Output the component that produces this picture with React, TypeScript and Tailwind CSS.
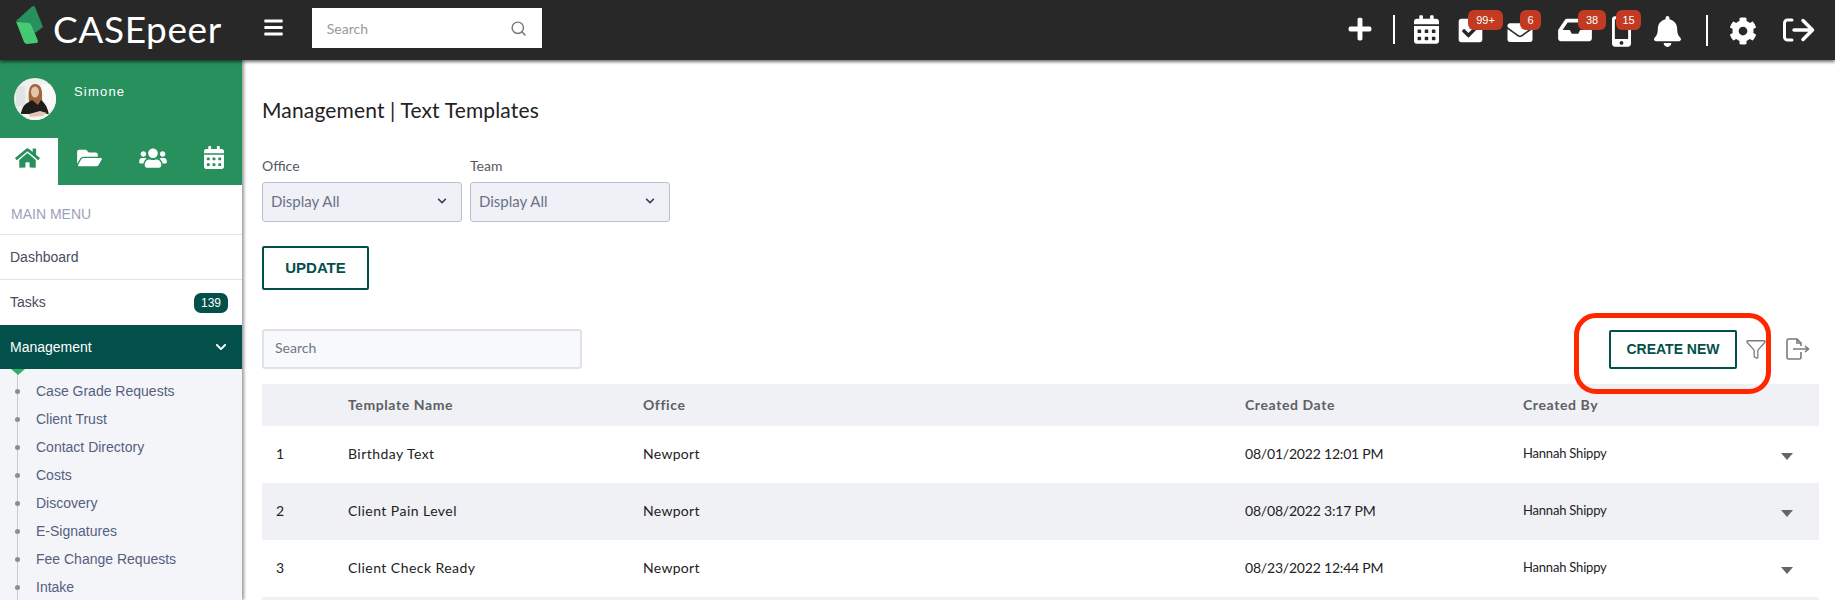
import { FaBars, FaBell, FaCalendarAlt, FaCheckSquare, FaChevronDown, FaCog, FaEnvelope, FaFolderOpen, FaHome, FaInbox, FaMobileAlt, FaPlus, FaUsers } from 'react-icons/fa';
import { Search, Filter } from 'lucide-react';

const subMenu = ['Case Grade Requests', 'Client Trust', 'Contact Directory', 'Costs', 'Discovery', 'E-Signatures', 'Fee Change Requests', 'Intake'];

const rows = [
  { id: 1, name: 'Birthday Text', date: '08/01/2022 12:01 PM' },
  { id: 2, name: 'Client Pain Level', date: '08/08/2022 3:17 PM' },
  { id: 3, name: 'Client Check Ready', date: '08/23/2022 12:44 PM' },
];

function Badge({ label, className }: { label: string; className: string }) {
  return (
    <span className={`absolute top-[10px] flex h-[20px] items-center justify-center rounded-[6px] bg-[#c23a22] text-[11px] text-white ${className}`}>
      {label}
    </span>
  );
}

function Logo() {
  return (
    <svg width="28" height="40" viewBox="16 5 28 40" className="mb-[10px] shrink-0">
      <path d="M16 21 L32 6.500 Q34 5.500 35 7 L43 27 L35 33 L31 24 Z" fill="#27905d" />
      <path d="M16 21.500 L29 23 Q31 23 32 26 L38 41 Q38 43 36 43 L27 44 Q25 44 24 42 Z" fill="#46c973" />
    </svg>
  );
}

function Avatar() {
  return (
    <svg width="42" height="42" viewBox="0 0 42 42" className="rounded-full bg-[#eef0ee]">
      <rect x="27" y="6" width="15" height="26" fill="#f8f9f8" />
      <rect x="2" y="8" width="9" height="20" fill="#dfe4e2" />
      <path d="M15 24 Q13 6 21 6 Q29 6 28 20 L29 30 L22 31 L15 30 Z" fill="#a0673c" />
      <ellipse cx="21" cy="14" rx="4" ry="5.500" fill="#e8c3aa" />
      <path d="M7 35 Q9 26 15 24 L18 22 L24 27 L27 22 Q33 26 35 37 L8 38 Z" fill="#1f1c1c" />
      <rect x="0" y="36" width="42" height="6" fill="#f4f4f3" />
      <path d="M15 36 L26 33 L33 35 L28 38 L16 39 Z" fill="#e3c4b3" />
    </svg>
  );
}

function Select({ label }: { label: string }) {
  return (
    <div className="w-[200px]">
      <div className="mb-[6px] h-[20px] font-['Lato'] text-[14px] leading-[20px] text-[#555a60]">{label}</div>
      <div className="flex h-[40px] items-center justify-between rounded-[3px] border border-[#b8bfd0] bg-[#f0f1f6] pb-[2px] pl-[8px] pr-[14px] font-['Lato'] text-[15px] text-[#68728a]">
        Display All
        <FaChevronDown className="h-[10px] w-[10px] text-[#3a4460]" />
      </div>
    </div>
  );
}

export default function App() {
  return (
    <div className="flex h-[600px] w-[1835px] flex-col overflow-hidden bg-white font-['Liberation_Sans',sans-serif]">
      {/* Top bar */}
      <header className="relative z-20 flex h-[60px] shrink-0 items-center bg-[#282828] pl-[16px] shadow-[0_2px_3px_rgba(0,0,0,0.55)]">
        <Logo />
        <span className="mb-[4px] ml-[9px] font-['Lato'] text-[37px] leading-none tracking-[0.6px] text-white">CASEpeer</span>
        <FaBars className="mb-[6px] ml-[42px] h-[21px] w-[19px] text-white" />
        <div className="mb-[4px] ml-[29px] flex h-[40px] w-[230px] items-center justify-between bg-white px-[15px] font-['Lato'] text-[14px] text-[#9a9a9a]">
          Search
          <Search className="h-[17px] w-[17px] text-[#777]" />
        </div>
        <div className="relative ml-auto h-full w-[490px] text-white">
          <FaPlus className="absolute left-[2px] top-[16px] h-[26px] w-[26px]" />
          <div className="absolute left-[48px] top-[15px] h-[29px] w-[2px] bg-white" />
          <FaCalendarAlt className="absolute left-[69px] top-[15px] h-[29px] w-[25px]" />
          <FaCheckSquare className="absolute left-[113px] top-[17px] h-[27px] w-[25px]" />
          <Badge label="99+" className="left-[123px] w-[35px]" />
          <FaEnvelope className="absolute left-[160px] top-[20px] h-[25px] w-[30px]" />
          <Badge label="6" className="left-[175px] w-[21px]" />
          <FaInbox className="absolute left-[212px] top-[15px] h-[30px] w-[36px]" />
          <Badge label="38" className="left-[233px] w-[28px]" />
          <FaMobileAlt className="absolute left-[267px] top-[16px] h-[31px] w-[19px]" />
          <Badge label="15" className="left-[271px] w-[25px]" />
          <FaBell className="absolute left-[309px] top-[16px] h-[31px] w-[27px]" />
          <div className="absolute left-[361px] top-[15px] h-[31px] w-[2px] bg-white" />
          <FaCog className="absolute left-[384px] top-[16px] h-[30px] w-[28px]" />
          <svg width="32" height="24" viewBox="0 0 32 24" fill="none" stroke="white" strokeWidth="3" strokeLinecap="round" strokeLinejoin="round" className="absolute left-[438px] top-[18px]">
            <path d="M9 2H4.500A3 3 0 0 0 1.500 5v14a3 3 0 0 0 3 3H9" />
            <path d="M11 12H29M20 2.500L29.500 12 20 21.500" strokeWidth="3.500" />
          </svg>
        </div>
      </header>

      <div className="flex min-h-0 flex-1">
        {/* Sidebar */}
        <aside className="relative z-10 flex w-[242px] shrink-0 flex-col bg-white shadow-[2px_0_3px_rgba(0,0,0,0.4)]">
          <div className="h-[125px] shrink-0 bg-[#28905d]">
            <div className="flex h-[78px] items-start pl-[14px] pt-[18px]">
              <Avatar />
              <span className="ml-[18px] mt-[4px] text-[13px] tracking-[1.2px] text-white">Simone</span>
            </div>
            <div className="grid h-[47px] grid-cols-[58px_70px_72px_42px] text-white">
              <div className="flex items-center bg-white pb-[8px] pl-[14px] text-[#28905d]"><FaHome className="h-[22px] w-[27px]" /></div>
              <div className="flex items-center pb-[8px] pl-[19px]"><FaFolderOpen className="h-[22px] w-[25px]" /></div>
              <div className="flex items-center pb-[8px] pl-[11px]"><FaUsers className="h-[22px] w-[28px]" /></div>
              <div className="flex items-center pb-[8px] pl-[4px]"><FaCalendarAlt className="h-[23px] w-[20px]" /></div>
            </div>
          </div>
          <div className="flex h-[49px] shrink-0 items-center pl-[11px] pt-[10px] text-[14px] text-[#9aa2b8]">MAIN MENU</div>
          <div className="flex h-[45px] shrink-0 items-center border-t border-[#e3e4ea] pl-[10px] text-[14px] text-[#474c60]">Dashboard</div>
          <div className="flex h-[46px] shrink-0 items-center justify-between border-t border-[#e3e4ea] pl-[10px] pr-[14px] text-[14px] text-[#474c60]">
            Tasks
            <span className="flex h-[20px] w-[34px] items-center justify-center rounded-[7px] bg-[#03504a] text-[12px] text-white">139</span>
          </div>
          <div className="relative flex h-[44px] shrink-0 items-center justify-between bg-[#03504a] pl-[10px] pr-[15px] text-[14px] text-white">
            Management
            <FaChevronDown className="h-[12px] w-[12px]" />
            <div className="absolute left-[11px] top-[44px] z-10 h-0 w-0 border-x-[7px] border-t-[6px] border-x-transparent border-t-[#2fb065]" />
          </div>
          <div className="relative flex-1 bg-[#f4f5f9] pt-[8px]">
            <div className="absolute bottom-0 left-[17px] top-0 w-px bg-[#c9cbd1]" />
            {subMenu.map((item) => (
              <div key={item} className="relative flex h-[28px] items-center pl-[36px] text-[14px] text-[#55607f]">
                <span className="absolute left-[15px] h-[5px] w-[5px] rounded-full bg-[#8a8d92]" />
                {item}
              </div>
            ))}
          </div>
        </aside>

        {/* Main content */}
        <main className="relative min-w-0 flex-1 pl-[20px] pr-[16px]">
          <h1 className="mt-[36px] h-[27px] font-['Lato'] text-[21px] leading-[27px] tracking-[0.15px] text-[#222]">Management | Text Templates</h1>
          <div className="mt-[33px] flex gap-[8px]">
            <Select label="Office" />
            <Select label="Team" />
          </div>
          <button className="mt-[24px] h-[44px] w-[107px] rounded-[2px] border-2 border-[#03504a] text-[15px] font-bold text-[#03504a]">UPDATE</button>
          <div className="mt-[39px] flex h-[40px] items-center justify-between">
            <div className="flex h-[40px] w-[320px] items-center rounded-[3px] border-2 border-[#dfe2e8] bg-[#f8f9fb] pb-[3px] pl-[11px] font-['Lato'] text-[14px] text-[#6d7689]">Search</div>
            <div className="flex items-center">
              <button className="h-[39px] w-[128px] rounded-[2px] border-2 border-[#03504a] text-[14px] font-bold text-[#03504a]">CREATE NEW</button>
              <Filter strokeWidth={1.4} className="ml-[8px] h-[22px] w-[22px] text-[#7b7b7b]" />
              <svg width="24" height="22" viewBox="0 0 24 22" fill="none" stroke="#7b7b7b" strokeWidth="1.6" className="ml-[19px] mr-[9px]">
                <path d="M15 8V5L11 1H2.500A1.500 1.500 0 0 0 1 2.500v17A1.500 1.500 0 0 0 2.500 21h11a1.500 1.500 0 0 0 1.500-1.500V14" />
                <path d="M11 1v4h4M7 11h15M19 8l3.500 3-3.500 3" />
              </svg>
            </div>
          </div>
          <div className="absolute left-[1332px] top-[253px] h-[81px] w-[197px] rounded-[22px] border-[5px] border-[#ff2600]" />
          <div className="mt-[15px] grid h-[42px] grid-cols-[86px_295px_602px_278px_296px] items-center bg-[#f0f1f5] pb-[2px] font-['Lato'] text-[14px] font-bold tracking-[0.6px] text-[#5c6066]">
            <div />
            <div>Template Name</div>
            <div>Office</div>
            <div>Created Date</div>
            <div>Created By</div>
          </div>
          {rows.map((row) => (
            <div key={row.id} className={`grid h-[57px] grid-cols-[86px_295px_602px_278px_296px] items-center pb-[2px] font-['Lato'] text-[14px] text-[#222] ${row.id % 2 === 0 ? 'bg-[#f0f1f5]' : 'bg-white'}`}>
              <div className="pl-[14px]">{row.id}</div>
              <div className="tracking-[0.45px]">{row.name}</div>
              <div className="tracking-[0.3px]">Newport</div>
              <div className="tracking-[-0.2px]">{row.date}</div>
              <div className="relative text-[13px] tracking-[-0.2px]">
                Hannah Shippy
                <span className="absolute left-[258px] top-[9px] h-0 w-0 border-x-[6px] border-t-[7px] border-x-transparent border-t-[#666]" />
              </div>
            </div>
          ))}
          <div className="h-[10px] bg-[#f0f1f5]" />
        </main>
      </div>
    </div>
  );
}
